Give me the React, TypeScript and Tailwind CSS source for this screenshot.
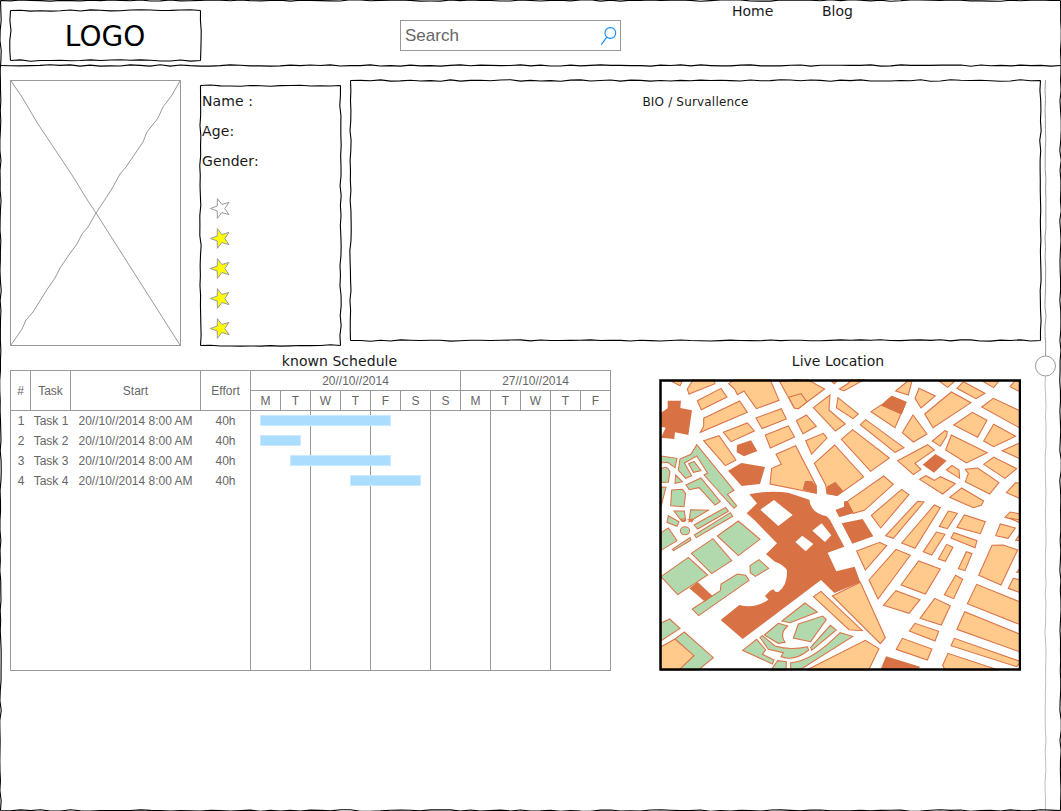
import React from "react";

const VERDANA = "font-['Verdana','DejaVu_Sans',sans-serif]";

function jitter(i: number, seed: number) {
  const v = Math.sin((i + 1) * 12.9898 + seed * 78.233) * 43758.5453;
  return (v - Math.floor(v) - 0.5) * 2;
}

function sketchLine(x1: number, y1: number, x2: number, y2: number, seed: number, amp = 0.75) {
  const len = Math.hypot(x2 - x1, y2 - y1);
  const n = Math.max(1, Math.round(len / 10));
  const nx = -(y2 - y1) / len;
  const ny = (x2 - x1) / len;
  const pts: string[] = [];
  for (let i = 0; i <= n; i++) {
    const o = i === 0 || i === n ? 0 : jitter(i, seed) * amp;
    const t = i / n;
    pts.push(`${(x1 + (x2 - x1) * t + nx * o).toFixed(2)},${(y1 + (y2 - y1) * t + ny * o).toFixed(2)}`);
  }
  return "M" + pts.join("L");
}

function SketchFrame({ w, h, seed }: { w: number; h: number; seed: number }) {
  const a = 0.5;
  const d = [
    sketchLine(a, a, w - a, a, seed),
    sketchLine(w - a, a, w - a, h - a, seed + 1),
    sketchLine(w - a, h - a, a, h - a, seed + 2),
    sketchLine(a, h - a, a, a, seed + 3),
  ].join(" ");
  return (
    <svg className="pointer-events-none absolute inset-0 overflow-visible" width={w} height={h} fill="none" stroke="#000" strokeWidth="1.1">
      <path d={d} />
    </svg>
  );
}

function Header() {
  return (
    <header className="relative flex h-[66px] shrink-0 items-start">
      <div className="relative mt-2.5 ml-2.5 flex h-[51px] w-[191px] items-center justify-center pt-0.5 pr-px text-[28px] leading-none">
        <SketchFrame w={191} h={51} seed={3} />
        LOGO
      </div>
      <div className="mt-5 ml-[199px] flex h-[31px] w-[221px] items-center justify-between border border-[#999] pr-[3px] pl-1 font-['Liberation_Sans',Arial,sans-serif] text-[17px] text-[#666]">
        <span>Search</span>
        <svg width="17" height="20" viewBox="0 0 17 20" fill="none" stroke="#0e8cf5" strokeWidth="1.1">
          <circle cx="10.3" cy="7" r="5.4" />
          <path d="M6.8 11.2 1.3 18.6" />
        </svg>
      </div>
      <nav className="mt-0.5 ml-[111px] flex text-sm leading-[18px] text-[#1a1a1a]">
        <span className="w-[90px]">Home</span>
        <span>Blog</span>
      </nav>
      <svg className="pointer-events-none absolute inset-0 overflow-visible" width="1061" height="66" fill="none" stroke="#000" strokeWidth="1.2">
        <path d={sketchLine(0, 65.5, 1061, 65.5, 31)} />
      </svg>
    </header>
  );
}

function Photo() {
  return (
    <div className="h-[266px] w-[171px] border border-[#999]">
      <svg width="169" height="264" fill="none" stroke="#999" strokeWidth="1">
        <path d="M0 0 11 16 27 43 39 61 61 94 77 120 85 132 169 264" />
        <path d="M169 0 161 14 152 26 147 37 136 51 132 61 115 86 109 93 102 106 93 120 85 132 77 146 71 153 66 163 60 171 49 187 44 197 37 207 22 231 15 239 11 248 0 264" />
      </svg>
    </div>
  );
}

function Star({ filled }: { filled: boolean }) {
  return (
    <svg className="overflow-visible" width="20" height="20" viewBox="0 0 20 20" fill={filled ? "#ffff00" : "#fff"} stroke="#999" strokeWidth="1">
      <path d="M.3 10.5 7.2 8.1 7.4.7 11.9 6.5 18.9 4.4 14.8 10.5 18.9 16.6 11.9 14.5 7.4 20.3 7.2 12.9Z" />
    </svg>
  );
}

function Profile() {
  return (
    <section className="relative mt-[5px] ml-[19px] h-[261px] w-[141px] pt-[1px] text-sm">
      <SketchFrame w={141} h={261} seed={11} />
      <div className="flex flex-col pl-0.5 leading-[30px] tracking-[0.1px] text-[#1a1a1a]">
        <span>Name :</span>
        <span>Age:</span>
        <span>Gender:</span>
      </div>
      <div className="mt-[22px] flex flex-col gap-2.5 pl-2.5">
        {[false, true, true, true, true].map((f, i) => (
          <Star key={i} filled={f} />
        ))}
      </div>
    </section>
  );
}

const DAYS = ["M", "T", "W", "T", "F", "S", "S", "M", "T", "W", "T", "F"];
const TASKS = [
  { n: 1, bar: "ml-[9px] w-[131px]" },
  { n: 2, bar: "ml-[9px] w-[41px]" },
  { n: 3, bar: "ml-[39px] w-[101px]" },
  { n: 4, bar: "ml-[99px] w-[71px]" },
];

function Schedule() {
  return (
    <div className="flex h-[301px] w-[601px] flex-col border border-[#999] font-['Liberation_Sans',Arial,sans-serif] text-xs text-[#666]">
      <div className="flex h-10 shrink-0 border-b border-[#999] text-center">
        <div className="flex w-5 items-center justify-center border-r border-[#999]">#</div>
        <div className="flex w-10 items-center justify-center border-r border-[#999]">Task</div>
        <div className="flex w-[130px] items-center justify-center border-r border-[#999]">Start</div>
        <div className="flex w-[50px] items-center justify-center border-r border-[#999]">Effort</div>
        <div className="flex flex-1 flex-col">
          <div className="flex h-5 border-b border-[#999] leading-5">
            <div className="w-[210px] border-r border-[#999]">20//10//2014</div>
            <div className="flex-1">27//10//2014</div>
          </div>
          <div className="flex flex-1 leading-5">
            {DAYS.map((d, i) => (
              <div key={i} className="w-[30px] border-r border-[#999] last:w-[29px] last:border-r-0">
                {d}
              </div>
            ))}
          </div>
        </div>
      </div>
      <div className="relative flex-1">
        <div className="absolute inset-0 flex">
          <div className="w-60 border-r border-[#999]" />
          {[0, 1, 2, 3, 4].map((i) => (
            <div key={i} className="w-[60px] border-r border-[#999]" />
          ))}
        </div>
        <div className="relative flex flex-col">
          {TASKS.map((t) => (
            <div key={t.n} className="flex h-5 items-start text-center leading-5">
              <span className="w-5">{t.n}</span>
              <span className="w-10">Task {t.n}</span>
              <span className="w-[129px]">20//10//2014 8:00 AM</span>
              <span className="w-[51px]">40h</span>
              <span className={`mt-1 h-[11px] border border-[#cceaff] bg-[#aaddff] ${t.bar}`} />
            </div>
          ))}
        </div>
      </div>
    </div>
  );
}

const ORANGE = "#ffca8b";
const GREEN = "#b2d9ae";
const RUST = "#d87245";

type District = { x: number; y: number; orange: string[]; green: string[]; rust: string[] };

/* Block outlines, in thirds of a pixel from each district's origin. */
const DISTRICTS: District[] = [
  {
    x: 0,
    y: 0,
    orange: [
      "M48 18 75 32 82 18Z",
      "M97 42 102 58 110 54 180 26 176 10 120 5Z",
      "M127 77 198 40 216 66 139 104Z",
      "M146 130 254 78 277 112 136 172 146 154Z",
      "M221 26 240 12 345 12 372 76 304 101 267 48 247 59 239 42Z",
      "M205 172 277 144 298 168 228 200Z",
      "M303 129 379 101 394 132 321 161Z",
      "M331 180 400 153 419 186 346 219Z",
      "M146 197 192 182 243 255 211 272Z",
    ],
    green: [
      "M18 243 66 250 60 278 38 262 18 264Z",
      "M18 282Q35 268 45 290L40 322 18 322Z",
      "M18 336 33 337 18 395Z",
      "M75 252 108 238 125 209 237 346 217 358 245 392 237 400 147 300 158 295 125 243 88 264 110 302 92 310 70 285Z",
      "M101 266 117 259 138 287 115 292Z",
      "M62 300 82 320 60 325Z",
      "M93 330 138 309 196 380 180 390 132 338 103 344Z",
      "M50 345 82 343 92 356 87 395 47 392Z",
      "M57 408 88 408 92 437 78 436Z",
      "M107 404 160 406 102 440Z",
      "M40 422 72 440 66 454 36 442Z",
      "M117 450 212 397 220 409 128 462Z",
      "M118 480 226 413 233 424 124 488Z",
      "M79 432 91 432 88 440 80 439Z",
      "M100 434 116 432 110 441Z",
    ],
    rust: [
      "M38 77 78 77 76 99 111 106 100 180 60 172 58 192 18 188 32 158 18 155 18 113 38 100Z",
      "M246 210 288 196 307 228 267 244 245 232Z",
      "M219 287 259 264 330 276 315 327 260 333Z",
    ],
  },
  {
    x: 120,
    y: 0,
    orange: [
      "M3 238 62 212 124 333 124 355 -15 327 -10 280 19 268Z",
      "M14 20 90 10 149 42 96 81 70 101 58 99Z",
      "M41 67 78 56 96 81 70 101 58 99Z",
      "M115 98 165 60 162 105 211 147 181 168Z",
      "M189 68 250 117 234 131 184 98Z",
      "M193 42 217 27 235 10 268 14 207 48Z",
      "M168 18 178 26 186 18Z",
      "M64 137 94 120 124 154 84 176Z",
      "M92 197 145 175 156 189 110 237Z",
      "M199 193 233 164 343 249 287 289Z",
      "M256 149 272 134 387 218 360 232Z",
      "M288 110 318 90 378 116 360 158Z",
      "M118 265 179 210 266 306 187 361 156 356 152 330Z",
      "M216 380 326 303 355 328 268 406 235 415Z",
      "M289 421 380 343 402 359 317 459Z",
      "M332 482 428 379 447 381 355 490Z",
    ],
    green: [],
    rust: [
      "M90 318 110 318 124 333 124 355 83 344Z",
      "M318 90 350 62 395 81 380 118Z",
      "M155 335 181 320 204 347 187 362 156 356Z",
      "M182 405 207 396 207 380 218 378 235 414 193 426Z",
    ],
  },
  {
    x: 240,
    y: 0,
    orange: [
      "M2 48 42 15 50 22 40 60Z",
      "M60 70 72 40 121 63 78 99Z",
      "M89 117 169 51 228 83 114 158Z",
      "M132 18 158 37 180 18Z",
      "M186 40 205 20 270 55 243 71Z",
      "M262 18 296 38 312 18Z",
      "M345 35 360 18 378 18 378 52Z",
      "M260 96 295 70 378 109 378 161Z",
      "M176 150 232 112 276 136 248 187Z",
      "M22 173 54 120 96 177 55 201Z",
      "M112 198 150 167 157 170 155 183 136 214Z",
      "M169 180 277 233 214 264 152 225Z",
      "M296 148 362 184 296 215 266 198Z",
      "M322 227 378 202 378 253Z",
      "M8 257 98 209 118 225 60 265 78 283 55 299Z",
      "M154 285 171 271 192 285 194 310Z",
      "M74 313 93 302 118 316 136 305 181 326 143 357Z",
      "M211 283 248 279 312 323 284 357 211 320 220 295Z",
      "M266 268 296 246 365 281 330 310Z",
      "M334 353 362 323 378 325 378 372Z",
      "M330 427 345 411 378 417 378 439Z",
      "M164 367 200 339 266 378 259 391 235 398Z",
    ],
    green: [],
    rust: ["M83 269 121 237 155 257 117 293Z"],
  },
  {
    x: 0,
    y: 145,
    orange: [],
    green: [
      "M52 88 105 53 108 60 56 92Z",
      "M76 32A14 12 0 1 0 104 32A14 12 0 1 0 76 32Z",
      "M18 38 40 24 66 62 18 91Z",
      "M187 48 250 3 315 58 250 107Z",
      "M109 100 174 56 230 122 170 161Z",
      "M18 170 100 112 158 165 68 224Z",
      "M285 137 312 119 341 145 301 169 286 158Z",
      "M112 267 196 212 198 192 247 162 272 166 282 181 131 287Z",
      "M18 309 44 297 75 325 18 362Z",
      "M60 357 88 336 175 413 130 450 60 450Z",
      "M263 391 305 358 332 390 322 403 357 420 352 432Z",
    ],
    rust: ["M103 205 128 186 172 227 150 245Z"],
  },
  {
    x: 120,
    y: 145,
    orange: [
      "M245 93 314 67 335 77 271 150Z",
      "M95 450 271 361 312 386 281 450Z",
      "M172 228 256 187 331 353 316 371Z",
      "M115 230 138 214 262 332 222 329Z",
      "M-342 380 -300 357 -243 407 -288 450 -342 450Z",
    ],
    green: [
      "M21 303 90 249 127 276 45 308Z",
      "M70 312 143 288 154 299 107 365 55 354Z",
      "M-32 345 10 310 38 318Q12 340 30 367L10 370Z",
      "M-45 352 -38 347 0 378Q45 392 97 380L101 390Q60 425 18 410L25 398 -20 388Z",
      "M107 382 166 316 184 330 110 391Z",
      "M47 428Q110 425 195 338L233 349 80 446 47 450Z",
      "M-12 450 8 422 34 425 33 450Z",
    ],
    rust: [
      "M-77 -77Q-20 -90 40 -82L103 -61Q108 -20 155 -11L165 0 208 80 158 98 184 154 239 140 256 187 178 219 138 180 -97 357 -163 300 -107 255Q-60 267 -20 239L-30 228 -15 212 -5 208 2 216 11 215Q38 195 36 150Q20 130 0 125L-27 103 6 70 -62 0 -85 -20 -54 -50ZM-44 -31 -3 -60 53 -15 10 18ZM112 32 140 10 169 46 150 66ZM61 66 82 47 115 72 92 94Z",
      "M200 10 263 -3 295 49 232 71Z",
    ],
  },
  {
    x: 240,
    y: 145,
    orange: [
      "M20 69 118 -45 136 -37 60 85Z",
      "M-78 180 3 88 46 106 -51 237Z",
      "M-35 256 3 212 75 239 42 280Z",
      "M4 388 22 355 111 387 97 420Z",
      "M133 19 160 -27 187 -20 157 26Z",
      "M186 22 208 -15 271 5 256 41Z",
      "M85 95 124 36 150 43 110 105Z",
      "M168 54 177 38 246 62 240 83Z",
      "M302 47 316 12 361 24 339 55Z",
      "M130 117 155 73 174 82 151 124Z",
      "M190 146 214 95 231 101 210 152Z",
      "M251 166 291 76 325 75 368 90 318 195Z",
      "M340 205 355 175 378 180 378 219Z",
      "M18 195 71 123 136 147 91 222Z",
      "M148 224 182 166 203 178 176 236Z",
      "M75 295 119 235 166 257 139 315Z",
      "M217 251 245 193 378 247 378 315Z",
      "M186 328 209 275 378 344 378 397Z",
      "M168 377 178 355 378 425 365 440Z",
      "M143 436 159 400 310 450 150 450Z",
      "M43 333 60 310 131 334 120 363Z",
      "M345 -5 378 0 378 10Z",
      "M362 61 372 46 378 62Z",
      "M365 157 374 146 378 157Z",
    ],
    green: [],
    rust: ["M-44 450 -27 409 75 440 70 450Z"],
  },
];

function CityMap() {
  return (
    <svg width="362" height="292" viewBox="4 4 362 292">
      {DISTRICTS.map((d, i) => (
        <g key={i} transform={`translate(${d.x} ${d.y}) scale(.33333)`} stroke="#da7448" strokeWidth="3.2">
          <path d={d.green.join("")} fill={GREEN} />
          <path d={d.rust.join("")} fill={RUST} fillRule="evenodd" stroke="none" />
          {d.orange.map((p) => (
            <path key={p} d={p} fill={ORANGE} />
          ))}
          {i === 1 && <path d={d.rust.join("")} fill={RUST} stroke="none" />}
        </g>
      ))}
      <rect x="5.5" y="5.5" width="359.5" height="289" fill="none" stroke="#000" strokeWidth="2.5" />
    </svg>
  );
}

function Slider() {
  return (
    <div className="w-5 shrink-0 pt-3.5">
      <svg className="overflow-visible" width="20" height="731" fill="none" strokeWidth="1">
        <path d={sketchLine(4.5, 0, 4.5, 276, 51, 0.6)} stroke="#999" />
        <path d={sketchLine(4.5, 296, 4.5, 731, 53, 0.6)} stroke="#b3c0ca" />
        <circle cx="4.5" cy="286" r="10" fill="#fff" stroke="#999" />
      </svg>
    </div>
  );
}

export default function App() {
  return (
    <div className={`relative flex h-[811px] w-[1061px] flex-col overflow-hidden bg-white text-black ${VERDANA}`}>
      <SketchFrame w={1061} h={811} seed={21} />
      <Header />
      <div className="flex flex-1">
        <main className="flex w-[1041px] flex-col pt-3.5 pl-2.5">
          <div className="flex h-[266px] shrink-0">
            <Photo />
            <Profile />
            <section className="relative ml-[9px] h-[261px] w-[691px] pt-3.5 text-center text-xs leading-4 tracking-[0.18px] text-[#1a1a1a]">
              <SketchFrame w={691} h={261} seed={41} />
              BIO / Survallence
            </section>
          </div>
          <div className="flex">
            <section className="w-[649px]">
              <h2 className="h-6 w-[659px] pt-1.5 text-center text-sm leading-[18px] tracking-[0.05px] text-[#1a1a1a]">known Schedule</h2>
              <Schedule />
            </section>
            <section className="w-[362px]">
              <h2 className="h-[33px] pt-1.5 pr-1 text-center text-sm leading-[18px] text-[#1a1a1a]">Live Location</h2>
              <CityMap />
            </section>
          </div>
        </main>
        <Slider />
      </div>
    </div>
  );
}
